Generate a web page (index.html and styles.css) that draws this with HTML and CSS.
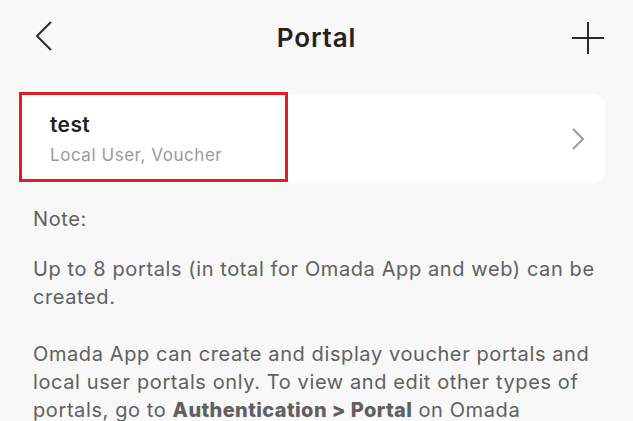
FILE: index.html
```html
<!DOCTYPE html>
<html>
<head>
<meta charset="utf-8">
<link rel="stylesheet" href="styles.css">
</head>
<body>
<div class="app">
  <header class="topbar">
    <svg class="back" width="20" height="32" viewBox="0 0 20 32"><path d="M17 2 L3 16 L17 30" fill="none" stroke="#2b2b2b" stroke-width="2"/></svg>
    <h1 class="title">Portal</h1>
    <svg class="add" width="34" height="34" viewBox="0 0 34 34"><path d="M17 1 V33 M1 17 H33" fill="none" stroke="#2b2b2b" stroke-width="2"/></svg>
  </header>
  <div class="card">
    <div class="card-text">
      <div class="card-title">test</div>
      <div class="card-sub">Local User, Voucher</div>
    </div>
    <svg class="chev" width="14" height="24" viewBox="0 0 14 24"><path d="M2 2 L12 12 L2 22" fill="none" stroke="#9a9a9a" stroke-width="2"/></svg>
    <div class="highlight"></div>
  </div>
  <div class="note">
    <p class="note-head">Note:</p>
    <p>Up to 8 portals (in total for Omada App and web) can be created.</p>
    <p>Omada App can create and display voucher portals and local user portals only. To view and edit other types of portals, go to <b>Authentication &gt; Portal</b> on Omada</p>
  </div>
</div>
</body>
</html>
```
FILE: styles.css
```css
* { box-sizing: border-box; }
html, body { margin: 0; padding: 0; }
body {
  background: #f8f8f8;
  font-family: Inter, Roboto, sans-serif;
  width: 633px;
  height: 421px;
  overflow: hidden;
}
.app { padding: 0 28px 0 18px; }
.topbar {
  height: 74px;
  display: flex;
  align-items: center;
  justify-content: space-between;
  padding: 0 0 0 16px;
  position: relative;
}
.back { margin-top: -2px; }
.add { margin-top: 2px; }
.title {
  position: absolute;
  left: 0; right: -10px;
  text-align: center;
  margin: 0;
  font-size: 26px;
  font-weight: 600;
  letter-spacing: 0.9px;
  color: #222;
  pointer-events: none;
}
.card {
  position: relative;
  margin-top: 20px;
  height: 89px;
  background: #fff;
  border-radius: 12px;
  display: flex;
  align-items: center;
  justify-content: space-between;
  padding: 0 20px 0 32px;
}
.card-title { font-size: 21px; font-weight: 600; color: #222; line-height: 26px; letter-spacing: 0.4px; }
.card-sub { font-size: 17px; color: #9a9a9a; margin-top: 6px; line-height: 22px; letter-spacing: 0.55px; }
.highlight {
  position: absolute;
  left: 1px; top: -2px;
  width: 269px; height: 90px;
  border: 3px solid #e41c24;
}
.note {
  padding: 0 0 0 15px;
  margin-top: 22px;
  margin-right: -8px;
  color: #606060;
  font-size: 20px;
  line-height: 28px;
  letter-spacing: 0.6px;
}
.note p { margin: 0 0 29px; }
.note .note-head { margin-bottom: 22px; }
.note b { font-weight: 800; letter-spacing: 0.4px; }
```
